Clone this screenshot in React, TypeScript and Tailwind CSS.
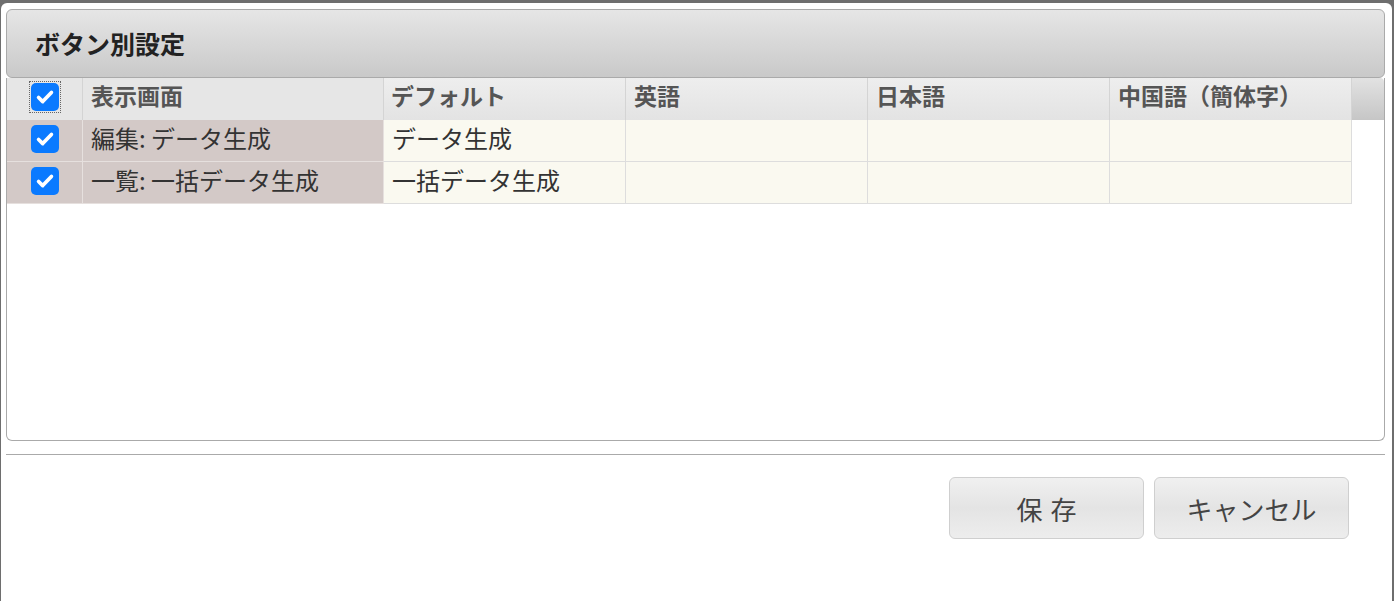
import React from "react";

const FONT = { fontFamily: '"Noto Sans CJK JP", "Noto Sans", sans-serif' };

const COLS = ["英語", "日本語", "中国語（簡体字）"];

const rows = [
  { screen: "編集: データ生成", def: "データ生成" },
  { screen: "一覧: 一括データ生成", def: "一括データ生成" },
];

function Check({ focus }: { focus?: boolean }) {
  return (
    <span
      className={
        "flex h-[32px] w-[32px] items-center justify-center " +
        (focus ? "outline-1 outline-dotted outline-[#666] -outline-offset-1" : "")
      }
    >
      <span className="flex h-[28px] w-[28px] items-center justify-center rounded-[5px] bg-[#0a7aff]">
        <svg viewBox="0 0 24 24" className="h-[22px] w-[22px]" fill="none" stroke="white" strokeWidth="4" strokeLinecap="round" strokeLinejoin="round">
          <path d="M5 12.5l4.5 4.5L19 7" />
        </svg>
      </span>
    </span>
  );
}

export default function App() {
  return (
    <div className="h-[601px] w-[1394px] overflow-hidden bg-[#6e6e6e] pt-[3px] pl-[1px] pr-[2px]" style={FONT}>
      <div className="flex h-[598px] flex-col rounded-t-[6px] bg-white pl-[5px] pr-[7px] pt-[6px]">
        {/* title bar */}
        <div className="flex h-[69px] shrink-0 items-center rounded-[6px] border border-[#aaa] bg-gradient-to-b from-[#e6e6e6] to-[#c9c9c9] pl-[28px]">
          <h1 className="text-[25px] font-bold text-[#222]">ボタン別設定</h1>
        </div>

        {/* table panel */}
        <div className="h-[363px] shrink-0 rounded-b-[6px] border border-t-0 border-[#aaa]">
          <div className="flex">
            <div className="flex">
              <div className="flex h-[42px] w-[76px] items-center justify-center border-r border-[#d4d4d4] bg-[#e6e6e6] pb-[4px]">
                <Check focus />
              </div>
              <div className="flex h-[42px] w-[301px] items-center border-r border-[#d4d4d4] bg-[#e6e6e6] pb-[7px] pl-[8px] text-[23px] font-bold text-[#555]">
                表示画面
              </div>
              <div className="flex h-[42px] w-[242px] items-center border-r border-[#d4d4d4] bg-gradient-to-b from-[#eeeeee] to-[#e3e3e3] pb-[7px] pl-[7px] text-[23px] font-bold text-[#555]">
                デフォルト
              </div>
              {COLS.map((c) => (
                <div
                  key={c}
                  className="flex h-[42px] w-[242px] items-center border-r border-[#d4d4d4] bg-gradient-to-b from-[#eeeeee] to-[#e3e3e3] pb-[7px] pl-[8px] text-[23px] font-bold text-[#555]"
                >
                  {c}
                </div>
              ))}
            </div>
            <div className="h-[42px] flex-1 rounded-tr-[4px] bg-gradient-to-b from-[#e2e2e2] to-[#c6c6c6]" />
          </div>

          {rows.map((r) => (
            <div key={r.screen} className="flex">
              <div className="flex h-[42px] w-[76px] items-center justify-center border-r border-b border-[#e6e0de] bg-[#d3c9c7] pb-[4px]">
                <Check />
              </div>
              <div className="flex h-[42px] w-[301px] items-center border-r border-b border-[#e6e0de] bg-[#d3c9c7] pb-[6px] pl-[8px] text-[24px] text-[#333]">
                {r.screen}
              </div>
              <div className="flex h-[42px] w-[242px] items-center border-r border-b border-[#dddddd] bg-[#faf9f0] pb-[6px] pl-[8px] text-[24px] text-[#333]">
                {r.def}
              </div>
              {COLS.map((c) => (
                <div key={c} className="h-[42px] w-[242px] border-r border-b border-[#dddddd] bg-[#faf9f0]" />
              ))}
            </div>
          ))}
        </div>

        <div className="mt-[13px] h-px shrink-0 bg-[#aaa]" />

        {/* buttons */}
        <div className="flex justify-end gap-[10px] pr-[36px] pt-[22px]">
          <button className="h-[62px] w-[195px] rounded-[6px] border border-[#cfcfcf] bg-gradient-to-b from-[#f0f0f0] via-[#e4e4e4] to-[#ededed] pl-[8px] text-[26px] tracking-[8px] text-[#444]">
            保存
          </button>
          <button className="h-[62px] w-[195px] rounded-[6px] border border-[#cfcfcf] bg-gradient-to-b from-[#f0f0f0] via-[#e4e4e4] to-[#ededed] text-[26px] text-[#444]">
            キャンセル
          </button>
        </div>
      </div>
    </div>
  );
}
